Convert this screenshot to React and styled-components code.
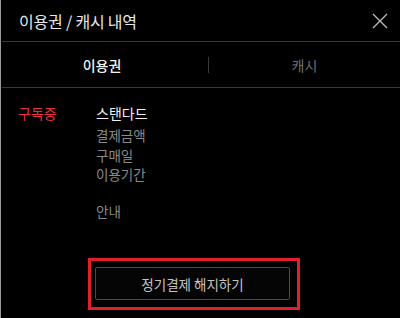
import React, { useState } from 'react'
import styled, { createGlobalStyle } from 'styled-components'

const GlobalStyle = createGlobalStyle`
    html, body {
        margin: 0;
        padding: 0;
        background: #000;
    }
    body {
        font-family: "Noto Sans CJK KR", "Noto Sans", sans-serif;
    }
`

const App = () => {
    const [tab, setTab] = useState('pass')

    return (
        <>
            <GlobalStyle />
            <Panel>
                <Header>
                    <Title>이용권 / 캐시 내역</Title>
                    <CloseButton aria-label="close">
                        <svg width="16" height="16" viewBox="0 0 16 16">
                            <path d="M1 1L15 15M15 1L1 15" stroke="#bdbdbd" strokeWidth="1.3" fill="none" />
                        </svg>
                    </CloseButton>
                </Header>
                <Tabs>
                    <Tab width="200px" active={tab === 'pass'} onClick={() => setTab('pass')}>이용권</Tab>
                    <TabDivider />
                    <Tab active={tab === 'cash'} onClick={() => setTab('cash')}>캐시</Tab>
                </Tabs>
                <Content>
                    <Status>구독중</Status>
                    <Details>
                        <PlanName>스탠다드</PlanName>
                        <InfoLine>결제금액</InfoLine>
                        <InfoLine>구매일</InfoLine>
                        <InfoLine>이용기간</InfoLine>
                        <InfoLine gap>안내</InfoLine>
                    </Details>
                </Content>
                <Footer>
                    <Highlight>
                        <CancelButton>정기결제 해지하기</CancelButton>
                    </Highlight>
                </Footer>
            </Panel>
        </>
    )
}

export default App

const Panel = styled.div`
    width: 400px;
    height: 318px;
    box-sizing: border-box;
    background: #000;
    border-left: 1px solid #9a9a9a;
    display: flex;
    flex-direction: column;
    overflow: hidden;
`

const Header = styled.div`
    height: 42px;
    box-sizing: border-box;
    display: flex;
    align-items: center;
    justify-content: space-between;
    padding: 0 12px 0 17px;
    border-bottom: 1px solid #3a3a3a;
    margin-left: 1px;
`

const Title = styled.div`
    color: #e8e8e8;
    font-size: 16px;
    letter-spacing: -0.2px;
`

const CloseButton = styled.button`
    background: none;
    border: none;
    padding: 0;
    width: 16px;
    height: 16px;
    display: flex;
    cursor: pointer;
`

const Tabs = styled.div`
    height: 46px;
    box-sizing: border-box;
    display: flex;
    align-items: center;
    border-bottom: 1px solid #3a3a3a;
    margin-left: 1px;
`

const Tab = styled.div`
    flex: ${(p) => (p.width ? `0 0 ${p.width}` : '1')};
    text-align: center;
    font-size: 14px;
    color: ${(p) => (p.active ? '#f2f2f2' : '#6f6f6f')};
    font-weight: ${(p) => (p.active ? 500 : 400)};
    cursor: pointer;
`

const TabDivider = styled.div`
    width: 1px;
    height: 16px;
    margin-left: 6px;
    background: #3a3a3a;
`

const Content = styled.div`
    flex: 1;
    display: flex;
    padding: 15px 0 0 17px;
`

const Status = styled.div`
    width: 78px;
    color: #e8303f;
    font-size: 14px;
    line-height: 20px;
`

const Details = styled.div`
    display: flex;
    flex-direction: column;
`

const PlanName = styled.div`
    color: #f2f2f2;
    font-size: 14px;
    line-height: 20px;
    margin-bottom: 3px;
`

const InfoLine = styled.div`
    color: #8a8a8a;
    font-size: 13.5px;
    line-height: 19.5px;
    margin-top: ${(p) => (p.gap ? '17px' : '0')};
`

const Footer = styled.div`
    display: flex;
    justify-content: center;
    padding: 0 0 8px 0;
    margin-left: -13px;
`

const Highlight = styled.div`
    width: 212px;
    height: 52px;
    box-sizing: border-box;
    border: 3px solid #e0202c;
    padding: 6px 7px 7px 4px;
    display: flex;
`

const CancelButton = styled.button`
    flex: 1;
    background: #050505;
    border: 1px solid #4a4a4a;
    border-radius: 2px;
    color: #c4c4c4;
    font-family: "Noto Sans CJK KR", "Noto Sans", sans-serif;
    font-size: 13.5px;
    cursor: pointer;
`
